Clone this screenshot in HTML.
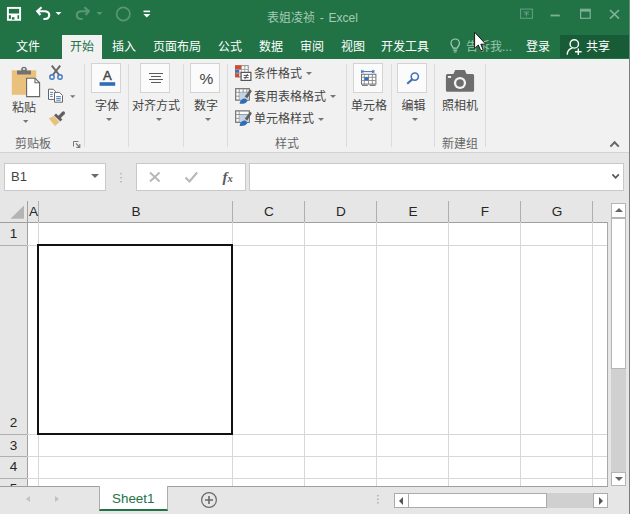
<!DOCTYPE html>
<html lang="zh-CN">
<head>
<meta charset="utf-8">
<title>表姐凌祯 - Excel</title>
<style>
html,body{margin:0;padding:0;}
body{width:630px;height:514px;overflow:hidden;position:relative;background:#e6e6e6;
  font-family:"Liberation Sans","Noto Sans CJK SC",sans-serif;font-size:12px;color:#444;}
.abs,#app *{position:absolute;box-sizing:border-box;}
#app{position:absolute;left:0;top:0;width:630px;height:514px;overflow:hidden;}
.t{white-space:nowrap;line-height:16px;height:16px;font-size:12px;}
/* title + tabs */
#green{left:0;top:0;width:630px;height:59px;background:#217346;}
.tab{color:#fff;top:39.2px;}
#tabactive{left:62px;top:35px;width:40px;height:25px;background:#f1f1f1;}
#share{left:560px;top:35px;width:69px;height:23px;background:#185c37;}
/* ribbon */
#ribbon{left:0;top:59px;width:630px;height:94px;background:#f1f1f1;border-bottom:1px solid #d2d2d2;}
.sep{top:64px;width:1px;height:83px;background:#dcdcdc;}
.box{top:63px;width:30px;height:30px;background:#fbfbfb;border:1px solid #d3d3d3;}
.lbl{color:#444;top:98.4px;}
.glbl{color:#666;top:135.7px;}
.dd{width:0;height:0;border-left:3px solid transparent;border-right:3px solid transparent;border-top:3px solid #777;}
/* formula bar */
.wbox{background:#fff;border:1px solid #c9c9c9;}
/* grid */
#grid{left:0;top:201px;width:608px;height:285px;background:#fff;overflow:hidden;}
.hl{left:27px;height:1px;background:#d7d7d7;width:581px;}
.vl{top:21px;width:1px;background:#d7d7d7;height:264px;}
.ch{top:3px;font-size:13.6px;color:#262626;text-align:center;line-height:16px;height:16px;}
.rh{left:0;width:27px;font-size:13.5px;color:#262626;text-align:center;line-height:16px;height:16px;}
.hvl{top:0;width:1px;height:21px;background:#afafaf;}
.hhl{left:0;width:27px;height:1px;background:#afafaf;}
</style>
</head>
<body>
<div id="app">

<!-- ===== Title bar & tabs ===== -->
<div id="green"></div>

<!-- QAT icons -->
<svg style="left:0;top:0" width="170" height="30" viewBox="0 0 170 30">
  <!-- save -->
  <rect x="7.9" y="7.9" width="12.2" height="11.9" fill="none" stroke="#fff" stroke-width="1.9"/>
  <rect x="8" y="13.5" width="12" height="1.7"  fill="#fff"/>
  <rect x="10.9" y="15" width="6.6" height="5" fill="#fff"/>
  <rect x="11.9" y="17.2" width="2.5" height="2.4" fill="#217346"/>
  <!-- undo -->
  <path d="M41.6 7.2 L37.2 11.2 L40.4 15" fill="none" stroke="#fff" stroke-width="2.1" stroke-linejoin="miter"/>
  <path d="M37.6 11.2 H44.4 C50.8 11.2 50.8 18.8 44.6 19 H43.4" fill="none" stroke="#fff" stroke-width="2.1"/>
  <path d="M55.5 12 h6 l-3 3z" fill="#fff"/>
  <!-- redo (dim) -->
  <g opacity="0.26">
  <path d="M84.4 7.2 L88.8 11.2 L85.6 15" fill="none" stroke="#fff" stroke-width="2.1"/>
  <path d="M88.4 11.2 H81.6 C75.2 11.2 75.2 18.8 81.4 19 H82.6" fill="none" stroke="#fff" stroke-width="2.1"/>
  <path d="M96.5 12 h6 l-3 3z" fill="#fff"/>
  <circle cx="123.3" cy="14" r="6.6" fill="none" stroke="#fff" stroke-width="1.6"/>
  </g>
  <!-- customize -->
  <rect x="143.5" y="10.6" width="6.6" height="1.6" fill="#fff"/>
  <path d="M143.3 14 h7 l-3.5 3.4z" fill="#fff"/>
</svg>

<div class="t" style="left:267px;top:10px;color:#a5cbb5;font-size:12px;word-spacing:1.4px;">表姐凌祯 - Excel</div>

<!-- window controls -->
<svg style="left:515px;top:4px" width="110" height="20" viewBox="515 4 110 20">
  <g fill="none" stroke="#5f9d80" stroke-width="1.1">
    <rect x="520.6" y="9.1" width="11.8" height="9.2"/>
    <path d="M523.5 12h6M526.5 12v4.5M524.3 15l2.2-2.4 2.2 2.4" stroke-width="1"/>
  </g>
  <g fill="none" stroke="#80b197" stroke-width="1.2">
    <path d="M550.5 15.5h9.3" stroke-width="1.8"/>
    <rect x="580.6" y="9.3" width="9.6" height="9"/>
    <path d="M580.6 10.6h9.6" stroke-width="2"/>
    <path d="M610 10l9 8.6M619 10l-9 8.6" stroke-width="1.7"/>
  </g>
</svg>

<div id="tabactive"></div>
<div class="t tab" style="left:16px;">文件</div>
<div class="t tab" style="left:70px;color:#217346;">开始</div>
<div class="t tab" style="left:112px;">插入</div>
<div class="t tab" style="left:153px;">页面布局</div>
<div class="t tab" style="left:218px;">公式</div>
<div class="t tab" style="left:259px;">数据</div>
<div class="t tab" style="left:300px;">审阅</div>
<div class="t tab" style="left:341px;">视图</div>
<div class="t tab" style="left:381px;">开发工具</div>
<!-- light bulb -->
<svg style="left:448px;top:37px" width="16" height="18" viewBox="0 0 16 18">
  <g fill="none" stroke="#a9cdb8" stroke-width="1.2">
    <path d="M5.3 11.2 C4.8 9.4 3 8.6 3 6.2 A4.2 4.2 0 0 1 11.4 6.2 C11.4 8.6 9.6 9.4 9.1 11.2 Z"/>
    <path d="M5.3 13.2h3.8M5.8 15h2.8"/>
  </g>
</svg>
<div class="t tab" style="left:466px;color:#9cc6ae;">告诉我...</div>
<div class="t tab" style="left:526px;">登录</div>
<div id="share"></div>
<svg style="left:565px;top:38px" width="20" height="19" viewBox="0 0 20 19">
  <g fill="none" stroke="#fff" stroke-width="1.4">
    <circle cx="9.3" cy="5.9" r="4.2"/>
    <path d="M2.2 16.6 C2.4 12.6 4.8 10.6 7.4 10.1"/>
    <path d="M13.3 10.4v6.6M10 13.7h6.6"/>
  </g>
</svg>
<div class="t tab" style="left:586px;">共享</div>

<!-- mouse cursor -->
<svg style="left:470px;top:29px" width="24" height="28" viewBox="0 0 24 28">
  <path d="M4.6 3.2 V19.6 L8.3 16 L10.8 21.8 L13.2 20.8 L10.8 15.2 H15.8 Z" fill="#fff" stroke="#1a1a1a" stroke-width="1" stroke-linejoin="round"/>
</svg>

<!-- ===== Ribbon ===== -->
<div id="ribbon"></div>
<div class="sep" style="left:84px"></div>
<div class="sep" style="left:128px"></div>
<div class="sep" style="left:183px"></div>
<div class="sep" style="left:227px"></div>
<div class="sep" style="left:346px"></div>
<div class="sep" style="left:391px"></div>
<div class="sep" style="left:434px"></div>
<div class="sep" style="left:485px"></div>

<!-- clipboard group -->
<svg style="left:8px;top:62px" width="76" height="90" viewBox="8 62 76 90">
  <!-- paste icon -->
  <rect x="11.8" y="70.3" width="24.4" height="24.5" fill="#e9c07c"/>
  <path d="M17 74.4 v-4 h4.2 v-1.2 a2.8 2.5 0 0 1 5.6 0 v1.2 h4.2 v4z" fill="#727272"/>
  <rect x="22.9" y="68.2" width="2.2" height="1.6" fill="#eee"/>
  <path d="M26.6 78.2 h8.4 l4.6 4.6 V96.6 h-13z" fill="#fff" stroke="#666" stroke-width="1.1"/>
  <path d="M35 78.2 v4.6 h4.6" fill="none" stroke="#666" stroke-width="1.1"/>
  <!-- scissors -->
  <g fill="none">
    <path d="M51.8 65.6 L59.2 75 M60.2 65.6 L52.8 75" stroke="#666" stroke-width="2"/>
    <circle cx="52" cy="77" r="2.2" stroke="#4577bd" stroke-width="1.4"/>
    <circle cx="60" cy="77" r="2.2" stroke="#4577bd" stroke-width="1.4"/>
  </g>
  <!-- copy -->
  <g stroke="#666" stroke-width="1" fill="#fff">
    <path d="M48.5 89.2 h4.6 l2.4 2.4 v7.8 h-7z"/>
    <path d="M54.5 92.4 h5 l3 3 v6.8 h-8z"/>
  </g>
  <path d="M50.2 92.4h3M50.2 94.4h2.6M50.2 96.4h2.6" stroke="#3a70b8" stroke-width="0.9"/>
  <path d="M56.2 96.6h4.6M56.2 98.4h4.6M56.2 100.2h4.6" stroke="#3a70b8" stroke-width="0.9"/>
  <path d="M70 95.3h5.4l-2.7 2.8z" fill="#777"/>
  <!-- format painter -->
  <path d="M53.6 116 L59.6 122 L55 126 L48.8 118.4z" fill="#e9c07c"/>
  <path d="M55 114.4 L61.4 120.6" stroke="#5f5f5f" stroke-width="2.8" fill="none"/>
  <path d="M63.4 113 L59.6 116.8" stroke="#5f5f5f" stroke-width="3.2" stroke-linecap="round" fill="none"/>
  <!-- paste arrow -->
  <path d="M23 120h5.4l-2.7 2.9z" fill="#777"/>
  <!-- dialog launcher -->
  <path d="M73.5 146.5v-5h5" fill="none" stroke="#777" stroke-width="1"/>
  <path d="M76 143.5l3.6 3.6M79.8 144v3.4h-3.4" fill="none" stroke="#777" stroke-width="1.1"/>
</svg>
<div class="t lbl" style="left:12px;top:99.8px;">粘贴</div>
<div class="t glbl" style="left:15px;">剪贴板</div>

<!-- font -->
<div class="box" style="left:91px"></div>
<svg style="left:91px;top:63px" width="30" height="30" viewBox="0 0 30 30">
  <text x="16.4" y="17.2" font-family="Liberation Sans, sans-serif" font-size="13" text-anchor="middle" fill="#444" stroke="#444" stroke-width="0.45">A</text>
  <rect x="8.6" y="19.2" width="15.6" height="3.6" fill="#2f6eb5"/>
</svg>
<div class="t lbl" style="left:95px;">字体</div>
<div class="dd" style="left:105.5px;top:118px"></div>

<!-- alignment -->
<div class="box" style="left:140px"></div>
<svg style="left:140px;top:63px" width="30" height="30" viewBox="0 0 30 30">
  <path d="M9 10.5h14M11 13.5h10M9 16.5h14M11 19.5h10" stroke="#5a5a5a" stroke-width="1"/>
</svg>
<div class="t lbl" style="left:132px;">对齐方式</div>
<div class="dd" style="left:155.5px;top:118px"></div>

<!-- number -->
<div class="box" style="left:190px"></div>
<div class="t" style="left:191.4px;top:70.6px;width:30px;text-align:center;font-size:15.5px;color:#444;">%</div>
<div class="t lbl" style="left:194px;">数字</div>
<div class="dd" style="left:204.5px;top:118px"></div>

<!-- styles -->
<svg style="left:232px;top:62px" width="22" height="68" viewBox="232 62 22 68">
  <!-- conditional formatting -->
  <g>
    <rect x="235.6" y="65.7" width="12.6" height="11.2" fill="#fff" stroke="#8a8a8a" stroke-width="1"/>
    <path d="M235.6 69.4h12.6M235.6 73.1h12.6M241.2 65.7v11.2M244.8 65.7v11.2" stroke="#9a9a9a" stroke-width="0.9"/>
    <rect x="235.1" y="65.3" width="6.2" height="3.9" fill="#d8492c"/>
    <rect x="235.1" y="69.8" width="4.2" height="3" fill="#3a70b8"/>
    <rect x="235.1" y="73.4" width="4.2" height="3.8" fill="#d8492c"/>
    <rect x="241.1" y="72.4" width="9.8" height="8" fill="#fff" stroke="#555" stroke-width="1.2"/>
    <path d="M243.6 75.4h5M243.6 77.6h5M247.6 74l-2.8 5" stroke="#444" stroke-width="0.9"/>
  </g>
  <!-- format as table -->
  <g>
    <rect x="235.7" y="88.7" width="13.6" height="11.4" fill="#fff" stroke="#6f6f6f" stroke-width="1.2"/>
    <path d="M235.7 92.3h13.6M235.7 96.2h13.6M239.2 88.7v11.4M243.2 88.7v11.4M246.8 88.7v11.4" stroke="#8a8a8a" stroke-width="0.9"/>
    <rect x="239.6" y="92.7" width="9.2" height="7" fill="#c3d3e8"/>
    <path d="M250.2 89.6 l1.7 1.5 -4.6 7.2 -2.6 -1.8z" fill="#606060"/>
    <path d="M239.6 103.8 c0.2-3.4 2.8-5.6 5.6-5.4 c1.8 1 2.4 2.2 2 3 c-1.4 2-4 2.6-7.6 2.4z" fill="#2f6eb5"/>
  </g>
  <!-- cell styles -->
  <g>
    <rect x="235.7" y="110.9" width="13.6" height="11.4" fill="#fff" stroke="#6f6f6f" stroke-width="1.2"/>
    <path d="M235.7 114.5h13.6M235.7 118.4h4M239.2 110.9v11.4" stroke="#8a8a8a" stroke-width="0.9"/>
    <rect x="239.6" y="114.9" width="9.2" height="7" fill="#c3d3e8"/>
    <path d="M250.2 111.8 l1.7 1.5 -4.6 7.2 -2.6 -1.8z" fill="#606060"/>
    <path d="M239.6 126 c0.2-3.4 2.8-5.6 5.6-5.4 c1.8 1 2.4 2.2 2 3 c-1.4 2-4 2.6-7.6 2.4z" fill="#2f6eb5"/>
  </g>
</svg>
<div class="t" style="left:254px;top:66.2px;color:#444;">条件格式</div>
<div class="dd" style="left:305.5px;top:71.5px"></div>
<div class="t" style="left:254px;top:89.2px;color:#444;">套用表格格式</div>
<div class="dd" style="left:329.5px;top:95px"></div>
<div class="t" style="left:254px;top:111.3px;color:#444;">单元格样式</div>
<div class="dd" style="left:317.5px;top:118px"></div>
<div class="t glbl" style="left:275px;">样式</div>

<!-- cells -->
<div class="box" style="left:353px"></div>
<svg style="left:353px;top:63px" width="30" height="30" viewBox="353 63 30 30">
  <path d="M361.6 71.6h12.2M361.7 69.9v3.4M373.9 69.9v3.4M363.6 70.2l-1.6 1.4 1.6 1.4M371.9 70.2l1.6 1.4-1.6 1.4" stroke="#3f74b6" stroke-width="1" fill="none"/>
  <rect x="361.5" y="74.3" width="14.4" height="9.8" fill="#fff" stroke="#707070" stroke-width="1"/>
  <path d="M361.5 77.3h14.4M361.5 80.5h14.4M364.3 74.3v9.8M368.5 74.3v9.8M372.4 74.3v9.8" stroke="#8a8a8a" stroke-width="0.9"/>
  <rect x="364.4" y="77.2" width="4.1" height="3.3" fill="#2f6eb5"/>
  <path d="M362 85.4h5.8M369.8 85.4h5.8" stroke="#707070" stroke-width="1"/>
</svg>
<div class="t lbl" style="left:351px;">单元格</div>
<div class="dd" style="left:367.5px;top:118px"></div>

<!-- editing -->
<div class="box" style="left:397px"></div>
<svg style="left:397px;top:63px" width="30" height="30" viewBox="0 0 30 30">
  <circle cx="17.8" cy="13.6" r="3.6" fill="none" stroke="#4072b4" stroke-width="1.6"/>
  <path d="M15.2 16.4 L10.2 20.8" stroke="#4072b4" stroke-width="2.1"/>
</svg>
<div class="t lbl" style="left:401.5px;">编辑</div>
<div class="dd" style="left:411.5px;top:118px"></div>

<!-- camera -->
<svg style="left:444px;top:68px" width="32" height="25" viewBox="0 0 32 25">
  <path d="M3.5 6 H9.4 L11.2 2 H20.8 L22.6 6 H28.5 A1.6 1.6 0 0 1 30.1 7.6 V22.2 A1.6 1.6 0 0 1 28.5 23.8 H3.5 A1.6 1.6 0 0 1 1.9 22.2 V7.6 A1.6 1.6 0 0 1 3.5 6z" fill="#6d6d6d"/>
  <circle cx="16" cy="15" r="6.1" fill="#f4f4f4"/>
  <circle cx="16" cy="15" r="3.8" fill="#6d6d6d"/>
  <rect x="3.9" y="8" width="3.2" height="1.9" fill="#f4f4f4"/>
</svg>
<div class="t lbl" style="left:442px;">照相机</div>
<div class="t glbl" style="left:442px;">新建组</div>

<!-- collapse caret -->
<svg style="left:608px;top:139px" width="14" height="10" viewBox="0 0 14 10">
  <path d="M2.4 7.6 L6.6 3.3 L10.8 7.6" fill="none" stroke="#666" stroke-width="2"/>
</svg>

<!-- ===== Formula bar ===== -->
<div class="wbox" style="left:4px;top:163px;width:102px;height:28px;"></div>
<div class="t" style="left:11px;top:169px;font-size:13px;color:#444;">B1</div>
<div class="dd" style="left:91.4px;top:174px;border-left-width:4px;border-right-width:4px;border-top-width:4.2px;border-top-color:#6a6a6a;"></div>
<svg style="left:118px;top:170px" width="6" height="16" viewBox="0 0 6 16">
  <rect x="2.4" y="3" width="1.4" height="1.4" fill="#aaa"/><rect x="2.4" y="7" width="1.4" height="1.4" fill="#aaa"/><rect x="2.4" y="11" width="1.4" height="1.4" fill="#aaa"/>
</svg>
<div class="wbox" style="left:136px;top:163px;width:110px;height:28px;"></div>
<svg style="left:136px;top:163px" width="110" height="28" viewBox="136 163 110 28">
  <path d="M150 172.5l9.6 9M159.6 172.5l-9.6 9" stroke="#b7b7b7" stroke-width="1.9" fill="none"/>
  <path d="M185.5 177.5l4 4 7.6-9" stroke="#b7b7b7" stroke-width="2.1" fill="none"/>
</svg>
<div class="t" style="left:222.5px;top:167.6px;font-family:'Liberation Serif',serif;font-style:italic;font-weight:bold;font-size:15px;color:#5a5a5a;line-height:18px;height:18px;">f<span style="position:static;font-size:10.5px;">x</span></div>
<div class="wbox" style="left:249px;top:163px;width:375px;height:28px;"></div>
<svg style="left:610px;top:171px" width="12" height="10" viewBox="0 0 12 10">
  <path d="M2.4 3.4 L5.6 6.8 L8.8 3.4" fill="none" stroke="#555" stroke-width="1.7"/>
</svg>

<!-- ===== Grid ===== -->
<div id="grid">
  <div style="left:0;top:0;width:608px;height:21px;background:#e6e6e6;"></div>
  <div style="left:0;top:0;width:27px;height:285px;background:#e6e6e6;"></div>
  <!-- select all triangle -->
  <svg style="left:8px;top:3px" width="18" height="16" viewBox="0 0 18 16"><path d="M16 1.6 V14.8 H2.4z" fill="#b4b4b4"/></svg>
  <!-- header lines -->
  <div style="left:0;top:21px;width:608px;height:1px;background:#9f9f9f;"></div>
  <div style="left:27px;top:0;width:1px;height:285px;background:#9f9f9f;"></div>
  <div class="hvl" style="left:38px"></div>
  <div class="hvl" style="left:232px"></div>
  <div class="hvl" style="left:304px"></div>
  <div class="hvl" style="left:376px"></div>
  <div class="hvl" style="left:448px"></div>
  <div class="hvl" style="left:520px"></div>
  <div class="hvl" style="left:592px"></div>
  <div class="hhl" style="top:44px"></div>
  <div class="hhl" style="top:233px"></div>
  <div class="hhl" style="top:255px"></div>
  <div class="hhl" style="top:277px"></div>
  <!-- column labels -->
  <div class="ch" style="left:28px;width:11px;">A</div>
  <div class="ch" style="left:39px;width:194px;">B</div>
  <div class="ch" style="left:233px;width:72px;">C</div>
  <div class="ch" style="left:305px;width:72px;">D</div>
  <div class="ch" style="left:377px;width:72px;">E</div>
  <div class="ch" style="left:449px;width:72px;">F</div>
  <div class="ch" style="left:521px;width:72px;">G</div>
  <!-- row labels -->
  <div class="rh" style="top:25px;">1</div>
  <div class="rh" style="top:214px;">2</div>
  <div class="rh" style="top:236.5px;">3</div>
  <div class="rh" style="top:258.3px;">4</div>
  <div class="rh" style="top:280.3px;">5</div>
  <!-- grid lines -->
  <div class="vl" style="left:38px"></div>
  <div class="vl" style="left:232px"></div>
  <div class="vl" style="left:304px"></div>
  <div class="vl" style="left:376px"></div>
  <div class="vl" style="left:448px"></div>
  <div class="vl" style="left:520px"></div>
  <div class="vl" style="left:592px"></div>
  <div class="hl" style="top:44px"></div>
  <div class="hl" style="top:233px"></div>
  <div class="hl" style="top:255px"></div>
  <div class="hl" style="top:277px"></div>
  <!-- selection -->
  <div style="left:37px;top:43px;width:196px;height:191px;border:2px solid #111;background:#fff;"></div>
  <!-- right edge -->
  <div style="left:607px;top:21px;width:1px;height:264px;background:#a9a9a9;"></div>
  <div style="left:607px;top:0;width:1px;height:21px;background:#e6e6e6;"></div>
</div>

<!-- vertical scrollbar -->
<div style="left:611px;top:203px;width:15px;height:283px;background:#d0d0d0;"></div>
<div style="left:611px;top:203px;width:15px;height:15px;background:#fff;border:1px solid #b5b5b5;"></div>
<div style="left:611px;top:218px;width:15px;height:151px;background:#fff;border:1px solid #b5b5b5;"></div>
<div style="left:611px;top:472px;width:15px;height:14px;background:#fff;border:1px solid #b5b5b5;"></div>
<div style="left:614.5px;top:208px;width:0;height:0;border-left:4px solid transparent;border-right:4px solid transparent;border-bottom:4.5px solid #666;"></div>
<div style="left:614.5px;top:477px;width:0;height:0;border-left:4px solid transparent;border-right:4px solid transparent;border-top:4.5px solid #666;"></div>

<!-- ===== Bottom bar ===== -->
<div style="left:0;top:486px;width:630px;height:28px;background:#e6e6e6;"></div>
<div style="left:0;top:486px;width:608px;height:1px;background:#9f9f9f;"></div>
<div style="left:26px;top:496.2px;width:0;height:0;border-top:3.5px solid transparent;border-bottom:3.5px solid transparent;border-right:4.2px solid #c2c2c2;"></div>
<div style="left:55px;top:496.2px;width:0;height:0;border-top:3.5px solid transparent;border-bottom:3.5px solid transparent;border-left:4.2px solid #c2c2c2;"></div>
<div style="left:99px;top:486px;width:69px;height:25px;background:#fff;border-left:1px solid #ababab;border-right:1px solid #ababab;border-bottom:2px solid #217346;"></div>
<div class="t" style="left:112px;top:490.5px;font-size:13.4px;color:#217346;">Sheet1</div>
<svg style="left:199px;top:490px" width="20" height="20" viewBox="0 0 20 20">
  <circle cx="10" cy="10" r="7.4" fill="none" stroke="#6a6a6a" stroke-width="1.2"/>
  <path d="M6 10h8M10 6v8" stroke="#6a6a6a" stroke-width="1.6"/>
</svg>
<svg style="left:375px;top:493px" width="6" height="14" viewBox="0 0 6 14">
  <rect x="2.2" y="2" width="1.4" height="1.4" fill="#aaa"/><rect x="2.2" y="5.6" width="1.4" height="1.4" fill="#aaa"/><rect x="2.2" y="9.2" width="1.4" height="1.4" fill="#aaa"/>
</svg>
<!-- horizontal scrollbar -->
<div style="left:394px;top:493px;width:214px;height:15px;background:#d0d0d0;"></div>
<div style="left:394px;top:493px;width:15px;height:15px;background:#fff;border:1px solid #ababab;"></div>
<div style="left:409px;top:493px;width:138px;height:15px;background:#fff;border:1px solid #ababab;border-left:none;"></div>
<div style="left:593px;top:493px;width:15px;height:15px;background:#fff;border:1px solid #ababab;"></div>
<div style="left:398.5px;top:496.5px;width:0;height:0;border-top:4px solid transparent;border-bottom:4px solid transparent;border-right:4.5px solid #555;"></div>
<div style="left:598.5px;top:496.5px;width:0;height:0;border-top:4px solid transparent;border-bottom:4px solid transparent;border-left:4.5px solid #555;"></div>

<div style="left:629px;top:0;width:1px;height:59px;background:#5f8f76;"></div>
<div style="left:629px;top:59px;width:1px;height:455px;background:#7d7d7d;"></div>
</div>
</body>
</html>
